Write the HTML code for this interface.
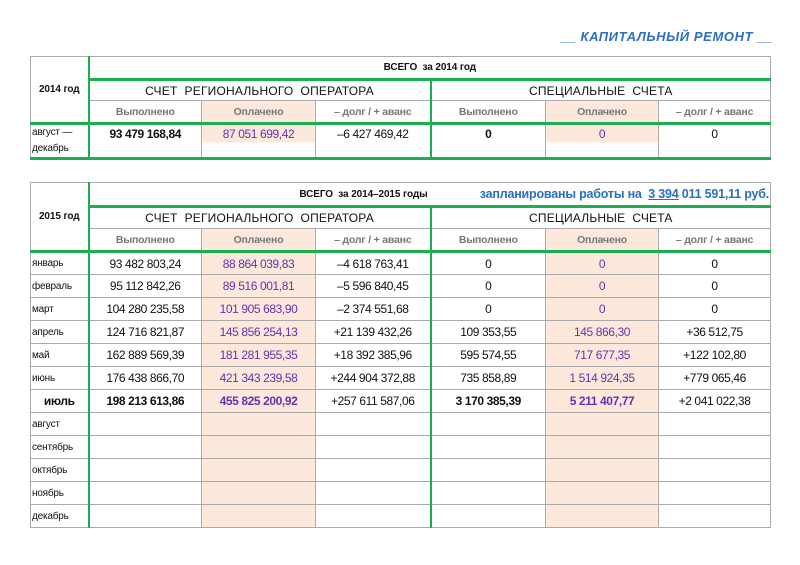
<!DOCTYPE html>
<html><head><meta charset="utf-8"><style>
body{margin:0;width:800px;height:565px;background:#fff;font-family:"Liberation Sans",Arial,sans-serif;position:relative;overflow:hidden}
.title{position:absolute;right:27px;top:29px;color:#2a6fc0;font-weight:bold;font-style:italic;font-size:13px;letter-spacing:0.6px;white-space:nowrap}
table{position:absolute;left:30px;border-collapse:collapse;table-layout:fixed}
td{border:1px solid #aaa;padding:0;text-align:center;font-size:12px;letter-spacing:-0.4px;color:#111;white-space:nowrap;overflow:hidden}
.h{font-size:10px;font-weight:bold;letter-spacing:-0.1px}
.sub{font-size:10.5px;color:#777;font-weight:bold;letter-spacing:-0.2px}
.grp{font-size:12px;letter-spacing:0.2px}
.pk{background:#fce9db}
.pu{color:#6a2fb0}
.b{font-weight:bold}
.m{text-align:left;font-size:10px;padding-left:1px;letter-spacing:-0.2px}
.gl{border-left:2px solid #1aae4f}
.gb{border-bottom:3px solid #1aae4f}
.gt{border-top:3px solid #1aae4f}
</style></head><body>
<div class="title">__ КАПИТАЛЬНЫЙ РЕМОНТ __</div>

<table style="top:56px;width:740px">
<colgroup><col style="width:58px"><col style="width:113px"><col style="width:114px"><col style="width:115px"><col style="width:115px"><col style="width:113px"><col style="width:112px"></colgroup>
<tr style="height:23px"><td rowspan="3" class="h">2014 год</td><td colspan="6" class="h gl gb">ВСЕГО&nbsp; за 2014 год</td></tr>
<tr style="height:21px"><td colspan="3" class="grp gl">СЧЕТ&nbsp; РЕГИОНАЛЬНОГО&nbsp; ОПЕРАТОРА</td><td colspan="3" class="grp gl">СПЕЦИАЛЬНЫЕ&nbsp; СЧЕТА</td></tr>
<tr style="height:23px"><td class="sub gl">Выполнено</td><td class="sub pk">Оплачено</td><td class="sub">– долг / + аванс</td><td class="sub gl">Выполнено</td><td class="sub pk">Оплачено</td><td class="sub">– долг / + аванс</td></tr>
<tr style="height:32px;vertical-align:top"><td class="m gt gb" style="line-height:16px;white-space:normal">август —<br>декабрь</td><td class="b gl gt gb" style="padding-top:2px">93 479 168,84</td><td class="pu gt gb" style="padding-top:2px;background:linear-gradient(#fce9db 0,#fce9db 17px,#fff 17px)">87 051 699,42</td><td class="gt gb" style="padding-top:2px">–6 427 469,42</td><td class="b gl gt gb" style="padding-top:2px">0</td><td class="pu gt gb" style="padding-top:2px;background:linear-gradient(#fce9db 0,#fce9db 17px,#fff 17px)">0</td><td class="gt gb" style="padding-top:2px">0</td></tr>
</table>

<table style="top:182px;width:740px">
<colgroup><col style="width:58px"><col style="width:113px"><col style="width:114px"><col style="width:115px"><col style="width:115px"><col style="width:113px"><col style="width:112px"></colgroup>
<tr style="height:24px"><td rowspan="3" class="h">2015 год</td><td colspan="3" class="h gl gb" style="text-align:right;padding-right:3px;border-right:none">ВСЕГО&nbsp; за 2014–2015 годы</td><td colspan="3" class="gb" style="border-left:none;text-align:right;color:#2a6fc0;font-weight:bold;font-size:12.5px;letter-spacing:-0.2px;padding-right:1px">запланированы работы на&nbsp; <u>3 394</u> 011 591,11 руб.</td></tr>
<tr style="height:22px"><td colspan="3" class="grp gl">СЧЕТ&nbsp; РЕГИОНАЛЬНОГО&nbsp; ОПЕРАТОРА</td><td colspan="3" class="grp gl">СПЕЦИАЛЬНЫЕ&nbsp; СЧЕТА</td></tr>
<tr style="height:23px"><td class="sub gl gb">Выполнено</td><td class="sub pk gb">Оплачено</td><td class="sub gb">– долг / + аванс</td><td class="sub gl gb">Выполнено</td><td class="sub pk gb">Оплачено</td><td class="sub gb">– долг / + аванс</td></tr>
<tr style="height:23px"><td class="m gt">январь</td><td class="gl">93 482 803,24</td><td class="pk pu">88 864 039,83</td><td>–4 618 763,41</td><td class="gl">0</td><td class="pk pu">0</td><td>0</td></tr>
<tr style="height:23px"><td class="m">февраль</td><td class="gl">95 112 842,26</td><td class="pk pu">89 516 001,81</td><td>–5 596 840,45</td><td class="gl">0</td><td class="pk pu">0</td><td>0</td></tr>
<tr style="height:23px"><td class="m">март</td><td class="gl">104 280 235,58</td><td class="pk pu">101 905 683,90</td><td>–2 374 551,68</td><td class="gl">0</td><td class="pk pu">0</td><td>0</td></tr>
<tr style="height:23px"><td class="m">апрель</td><td class="gl">124 716 821,87</td><td class="pk pu">145 856 254,13</td><td>+21 139 432,26</td><td class="gl">109 353,55</td><td class="pk pu">145 866,30</td><td>+36 512,75</td></tr>
<tr style="height:23px"><td class="m">май</td><td class="gl">162 889 569,39</td><td class="pk pu">181 281 955,35</td><td>+18 392 385,96</td><td class="gl">595 574,55</td><td class="pk pu">717 677,35</td><td>+122 102,80</td></tr>
<tr style="height:23px"><td class="m">июнь</td><td class="gl">176 438 866,70</td><td class="pk pu">421 343 239,58</td><td>+244 904 372,88</td><td class="gl">735 858,89</td><td class="pk pu">1 514 924,35</td><td>+779 065,46</td></tr>
<tr style="height:23px"><td class="b" style="font-size:12px">июль</td><td class="gl b">198 213 613,86</td><td class="pk pu b">455 825 200,92</td><td>+257 611 587,06</td><td class="gl b">3 170 385,39</td><td class="pk pu b">5 211 407,77</td><td>+2 041 022,38</td></tr>
<tr style="height:23px"><td class="m">август</td><td class="gl"></td><td class="pk"></td><td></td><td class="gl"></td><td class="pk"></td><td></td></tr>
<tr style="height:23px"><td class="m">сентябрь</td><td class="gl"></td><td class="pk"></td><td></td><td class="gl"></td><td class="pk"></td><td></td></tr>
<tr style="height:23px"><td class="m">октябрь</td><td class="gl"></td><td class="pk"></td><td></td><td class="gl"></td><td class="pk"></td><td></td></tr>
<tr style="height:23px"><td class="m">ноябрь</td><td class="gl"></td><td class="pk"></td><td></td><td class="gl"></td><td class="pk"></td><td></td></tr>
<tr style="height:23px"><td class="m">декабрь</td><td class="gl"></td><td class="pk"></td><td></td><td class="gl"></td><td class="pk"></td><td></td></tr>
</table>
</body></html>
